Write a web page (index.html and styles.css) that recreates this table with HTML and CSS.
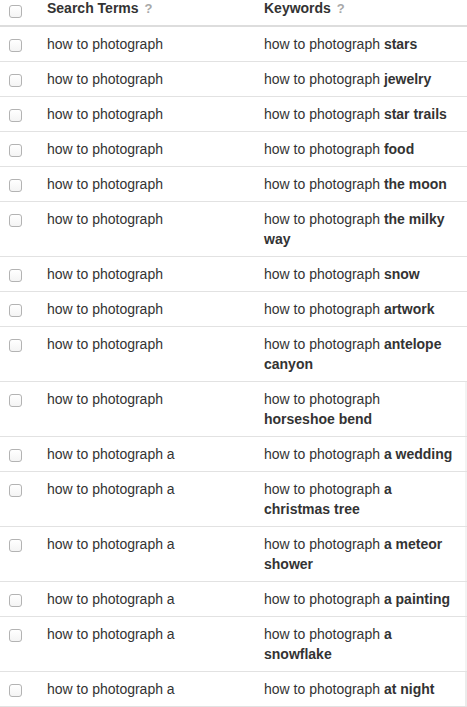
FILE: index.html
```html
<!DOCTYPE html>
<html>
<head>
<meta charset="utf-8">
<link rel="stylesheet" href="styles.css">
</head>
<body>
<div class="list">
  <div class="row head">
    <div class="check"><span class="cb"></span></div>
    <div class="term">Search Terms <span class="q">?</span></div>
    <div class="kw">Keywords <span class="q">?</span></div>
  </div>
  <div class="row"><div class="check"><span class="cb"></span></div><div class="term">how to photograph</div><div class="kw">how to photograph <b>stars</b></div></div>
  <div class="row"><div class="check"><span class="cb"></span></div><div class="term">how to photograph</div><div class="kw">how to photograph <b>jewelry</b></div></div>
  <div class="row"><div class="check"><span class="cb"></span></div><div class="term">how to photograph</div><div class="kw">how to photograph <b>star trails</b></div></div>
  <div class="row"><div class="check"><span class="cb"></span></div><div class="term">how to photograph</div><div class="kw">how to photograph <b>food</b></div></div>
  <div class="row"><div class="check"><span class="cb"></span></div><div class="term">how to photograph</div><div class="kw">how to photograph <b>the moon</b></div></div>
  <div class="row"><div class="check"><span class="cb"></span></div><div class="term">how to photograph</div><div class="kw">how to photograph <b>the milky way</b></div></div>
  <div class="row"><div class="check"><span class="cb"></span></div><div class="term">how to photograph</div><div class="kw">how to photograph <b>snow</b></div></div>
  <div class="row"><div class="check"><span class="cb"></span></div><div class="term">how to photograph</div><div class="kw">how to photograph <b>artwork</b></div></div>
  <div class="row"><div class="check"><span class="cb"></span></div><div class="term">how to photograph</div><div class="kw">how to photograph <b>antelope canyon</b></div></div>
  <div class="row edge"><div class="check"><span class="cb"></span></div><div class="term">how to photograph</div><div class="kw">how to photograph <b>horseshoe bend</b></div></div>
  <div class="row edge"><div class="check"><span class="cb"></span></div><div class="term">how to photograph a</div><div class="kw">how to photograph <b>a wedding</b></div></div>
  <div class="row edge"><div class="check"><span class="cb"></span></div><div class="term">how to photograph a</div><div class="kw">how to photograph <b>a christmas tree</b></div></div>
  <div class="row edge"><div class="check"><span class="cb"></span></div><div class="term">how to photograph a</div><div class="kw">how to photograph <b>a meteor shower</b></div></div>
  <div class="row edge"><div class="check"><span class="cb"></span></div><div class="term">how to photograph a</div><div class="kw">how to photograph <b>a painting</b></div></div>
  <div class="row edge"><div class="check"><span class="cb"></span></div><div class="term">how to photograph a</div><div class="kw">how to photograph <b>a snowflake</b></div></div>
  <div class="row edge last"><div class="check"><span class="cb"></span></div><div class="term">how to photograph a</div><div class="kw">how to photograph <b>at night</b></div></div>
</div>
</body>
</html>
```
FILE: styles.css
```css
html, body {
  margin: 0;
  padding: 0;
  background: #fff;
}
body {
  font-family: "Liberation Sans", Arial, Helvetica, sans-serif;
  font-size: 14px;
  line-height: 20px;
  color: #333;
  overflow: hidden;
}
.list {
  width: 467px;
  margin-top: -2px;
}
.row {
  display: grid;
  grid-template-columns: 47px 217px 1fr;
  padding: 7px 0;
  border-bottom: 1px solid #e2e2e2;
}
.row.head {
  padding: 0 0 7px;
  border-bottom: 2px solid #ddd;
  font-weight: bold;
}
.kw {
  padding-right: 13px;
}
.edge {
  box-shadow: inset -2px 0 0 #f3f3f3;
}
.edge.last {
  box-shadow: inset -2px 0 0 #ebebeb;
}
.q {
  color: #a8a8a8;
  font-size: 13px;
  line-height: 1;
  margin-left: 2px;
}
.cb {
  display: block;
  width: 11px;
  height: 11px;
  margin: 5px 0 0 9px;
  border: 1px solid #b3b3b3;
  border-radius: 3px;
  background: linear-gradient(#fff, #f4f4f4);
}
.head .cb {
  margin-top: 7px;
}
```
